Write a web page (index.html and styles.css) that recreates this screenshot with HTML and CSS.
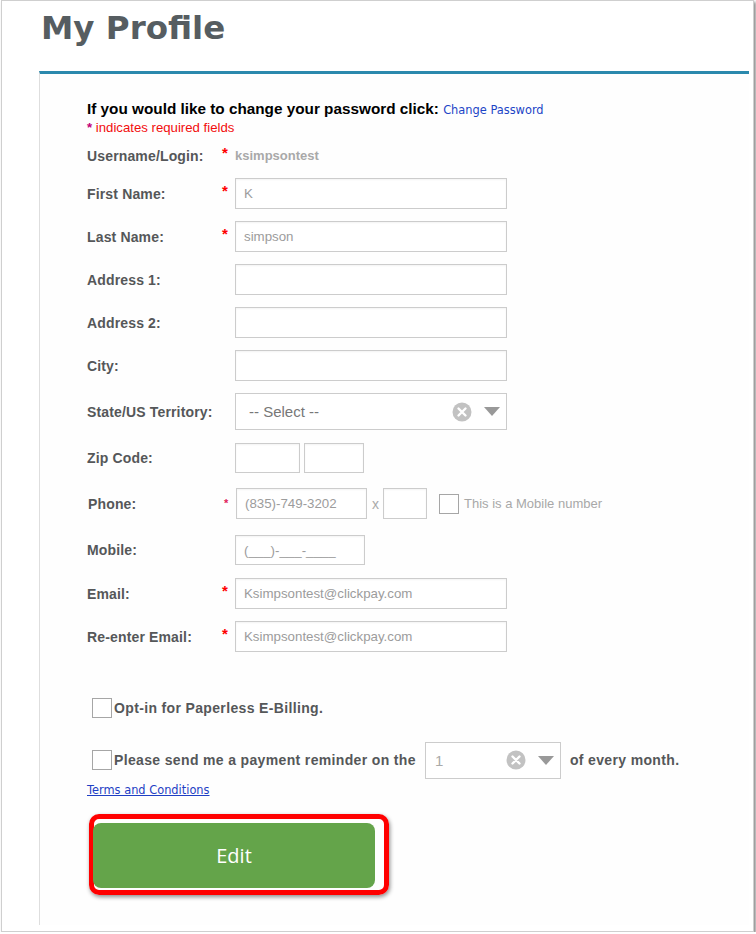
FILE: index.html
```html
<!DOCTYPE html>
<html>
<head>
<meta charset="utf-8">
<title>My Profile</title>
<link rel="stylesheet" href="styles.css">
</head>
<body>
<div class="frame">
  <div class="page">
    <h1 class="title">My Profile</h1>
    <div class="panel">
      <p class="pw-line">If you would like to change your password click: <a class="link" href="#">Change Password</a></p>
      <p class="req-note"><span class="note-star">*</span> indicates required fields</p>

      <div class="fields">
        <div class="row row-user">
          <span class="lbl">Username/Login:</span><span class="req">*</span><span class="static">ksimpsontest</span>
        </div>
        <div class="row">
          <span class="lbl">First Name:</span><span class="req">*</span><input class="inp" type="text" value="K">
        </div>
        <div class="row">
          <span class="lbl">Last Name:</span><span class="req">*</span><input class="inp" type="text" value="simpson">
        </div>
        <div class="row">
          <span class="lbl">Address 1:</span><span></span><input class="inp" type="text" value="">
        </div>
        <div class="row">
          <span class="lbl">Address 2:</span><span></span><input class="inp" type="text" value="">
        </div>
        <div class="row">
          <span class="lbl">City:</span><span></span><input class="inp" type="text" value="">
        </div>
        <div class="row">
          <span class="lbl">State/US Territory:</span><span></span>
          <div class="select select-state">
            <span class="sel-text">-- Select --</span>
            <svg class="sel-clear" width="20" height="20" viewBox="0 0 20 20"><circle cx="10" cy="10" r="9.5" fill="#c2c2c2"/><path d="M6.5 6.5 L13.5 13.5 M13.5 6.5 L6.5 13.5" stroke="#fff" stroke-width="2.4" stroke-linecap="round"/></svg>
            <svg class="sel-arrow" width="16" height="9" viewBox="0 0 16 9"><path d="M0 0 H16 L8 9 Z" fill="#999"/></svg>
          </div>
        </div>
        <div class="row row-zip">
          <span class="lbl">Zip Code:</span><span></span>
          <div class="inline">
            <input class="inp inp-zip1" type="text" value="">
            <input class="inp inp-zip2" type="text" value="">
          </div>
        </div>
        <div class="row row-phone">
          <span class="lbl lbl-phone">Phone:</span><span class="req req-small">*</span>
          <div class="inline">
            <input class="inp inp-phone" type="text" value="(835)-749-3202">
            <span class="ext-x">x</span>
            <input class="inp inp-ext" type="text" value="">
            <span class="box box-mobile"></span>
            <span class="mobile-note">This is a Mobile number</span>
          </div>
        </div>
        <div class="row row-mobile">
          <span class="lbl">Mobile:</span><span></span>
          <input class="inp inp-mobile" type="text" value="(___)-___-____">
        </div>
        <div class="row row-email">
          <span class="lbl">Email:</span><span class="req">*</span><input class="inp" type="text" value="Ksimpsontest@clickpay.com">
        </div>
        <div class="row">
          <span class="lbl">Re-enter Email:</span><span class="req">*</span><input class="inp" type="text" value="Ksimpsontest@clickpay.com">
        </div>
      </div>

      <div class="options">
        <div class="opt opt-paperless">
          <span class="box"></span><span class="opt-text">Opt-in for Paperless E-Billing.</span>
        </div>
        <div class="opt opt-reminder">
          <span class="box"></span><span class="opt-text">Please send me a payment reminder on the</span>
          <div class="select select-day">
            <span class="sel-text sel-day">1</span>
            <svg class="sel-clear" width="20" height="20" viewBox="0 0 20 20"><circle cx="10" cy="10" r="9.5" fill="#c2c2c2"/><path d="M6.5 6.5 L13.5 13.5 M13.5 6.5 L6.5 13.5" stroke="#fff" stroke-width="2.4" stroke-linecap="round"/></svg>
            <svg class="sel-arrow" width="16" height="9" viewBox="0 0 16 9"><path d="M0 0 H16 L8 9 Z" fill="#999"/></svg>
          </div>
          <span class="opt-text opt-after">of every month.</span>
        </div>
        <a class="terms" href="#">Terms and Conditions</a>
        <div class="highlight">
          <button class="edit-btn" type="button">Edit</button>
        </div>
      </div>
    </div>
  </div>
</div>
</body>
</html>
```
FILE: styles.css
```css
html, body {
  margin: 0;
  padding: 0;
  background: #ffffff;
}

.frame {
  box-sizing: border-box;
  margin-left: 1px;
  width: 753px;
  height: 932px;
  border: 1px solid #cfcfcf;
  background: #ffffff;
  box-shadow: 2px 2px 3px rgba(0, 0, 0, 0.45);
}

.page {
  padding-left: 37px;
}

.title {
  margin: 0;
  padding-top: 7px;
  padding-left: 2px;
  height: 40px;
  font-family: "DejaVu Sans", Verdana, sans-serif;
  font-weight: bold;
  font-size: 32.5px;
  line-height: 40px;
  color: #565d61;
}

.panel {
  box-sizing: border-box;
  margin-top: 23px;
  width: 710px;
  border-top: 3px solid #2b89ad;
  border-left: 1px solid #dedede;
  background: #fefefe;
  padding: 27px 0 30px 47px;
}

.pw-line {
  margin: 0;
  height: 16px;
  font-family: "Liberation Sans", Arial, sans-serif;
  font-weight: bold;
  font-size: 15.3px;
  line-height: 16px;
  color: #000;
  white-space: nowrap;
}

.link {
  font-family: "DejaVu Sans", Tahoma, sans-serif;
  font-weight: normal;
  font-size: 11.4px;
  line-height: 16px;
  color: #1c45c6;
  text-decoration: none;
}

.req-note {
  margin: 3px 0 0 0;
  height: 16px;
  font-family: "Liberation Sans", Arial, sans-serif;
  font-size: 13.2px;
  line-height: 16px;
  color: #f20d0d;
}

.note-star {
  color: #c0007a;
  font-weight: bold;
}

.fields {
  margin-top: 9px;
  display: flex;
  flex-direction: column;
  gap: 12px;
}

.row {
  display: grid;
  grid-template-columns: 133px 15px auto;
  align-items: center;
  justify-items: start;
}

.row-user { height: 21px; }
.row-zip { margin-top: 1px; }
.row-phone { margin-top: 3px; }
.row-mobile { margin-top: 4px; }
.row-email { margin-top: 1px; }

.lbl {
  font-family: "Liberation Sans", Arial, sans-serif;
  font-weight: bold;
  font-size: 14px;
  letter-spacing: 0.15px;
  color: #555759;
  white-space: nowrap;
}

.lbl-phone { padding-left: 1px; }

.req {
  font-family: "Liberation Sans", Arial, sans-serif;
  font-weight: bold;
  font-size: 15px;
  color: #f00;
  padding-left: 2px;
  position: relative;
  top: -3px;
}

.req-small {
  font-size: 11px;
  padding-left: 4px;
  top: -1px;
  color: #e0205a;
}

.static {
  font-family: "Liberation Sans", Arial, sans-serif;
  font-weight: bold;
  font-size: 13px;
  color: #a9a9a9;
}

.inp {
  box-sizing: border-box;
  width: 272px;
  height: 31px;
  margin: 0;
  padding: 0 8px;
  border: 1px solid #cccccc;
  border-radius: 0;
  background: #fff;
  box-shadow: inset 0 1px 2px rgba(0, 0, 0, 0.05);
  font-family: "Liberation Sans", Arial, sans-serif;
  font-size: 13.3px;
  color: #9c9c9c;
  outline: none;
}

.inline {
  display: flex;
  align-items: center;
}

.inp-zip1 { width: 65px; height: 30px; }
.inp-zip2 { width: 60px; height: 30px; margin-left: 4px; }

.inp-phone { width: 131px; margin-left: 1px; }

.ext-x {
  margin-left: 5px;
  font-family: "Liberation Sans", Arial, sans-serif;
  font-size: 14px;
  color: #aaa;
}

.inp-ext { width: 44px; margin-left: 4px; }

.box {
  box-sizing: border-box;
  display: inline-block;
  width: 20px;
  height: 20px;
  border: 1px solid #a6a6a6;
  background: #fff;
  flex: none;
}

.box-mobile { margin-left: 12px; }

.mobile-note {
  margin-left: 5px;
  font-family: "Liberation Sans", Arial, sans-serif;
  font-size: 13px;
  color: #a8a8a8;
}

.inp-mobile { width: 130px; height: 30px; }

.select {
  box-sizing: border-box;
  display: flex;
  align-items: center;
  height: 37px;
  border: 1px solid #cccccc;
  background: #fff;
}

.select-state { width: 272px; padding: 0 6px 0 13px; }

.sel-text {
  flex: 1;
  font-family: "Liberation Sans", Arial, sans-serif;
  font-size: 15px;
  color: #777;
}

.sel-clear { flex: none; }
.sel-arrow { flex: none; margin-left: 12px; }

.options {
  margin-top: 46px;
  display: flex;
  flex-direction: column;
  align-items: flex-start;
}

.opt {
  display: flex;
  align-items: center;
  margin-left: 5px;
}

.opt-paperless { height: 20px; }
.opt-reminder { margin-top: 24px; height: 36px; }

.opt-text {
  margin-left: 2px;
  font-family: "Liberation Sans", Arial, sans-serif;
  font-weight: bold;
  font-size: 14px;
  letter-spacing: 0.35px;
  color: #555759;
  white-space: nowrap;
}

.select-day {
  width: 136px;
  height: 37px;
  margin-left: 9px;
  padding: 0 6px 0 9px;
}

.sel-day {
  font-size: 15px;
  color: #aaa;
}

.opt-after { margin-left: 9px; }

.terms {
  margin-top: 4px;
  font-family: "DejaVu Sans", Tahoma, sans-serif;
  font-size: 11.4px;
  line-height: 16px;
  color: #1f3fc4;
  text-decoration: underline;
}

.highlight {
  box-sizing: border-box;
  margin-top: 16px;
  margin-left: 2px;
  width: 300px;
  height: 81px;
  border: 5px solid #ff0000;
  border-radius: 10px;
  box-shadow: 1px 2px 4px rgba(0, 0, 0, 0.45);
  padding-top: 4px;
}

.edit-btn {
  display: block;
  box-sizing: border-box;
  margin: 0 0 0 -1px;
  width: 282px;
  height: 65px;
  border: none;
  border-radius: 8px;
  background: #64a44a;
  color: #fff;
  font-family: "Open Sans", sans-serif;
  font-size: 20px;
  cursor: pointer;
}
```
